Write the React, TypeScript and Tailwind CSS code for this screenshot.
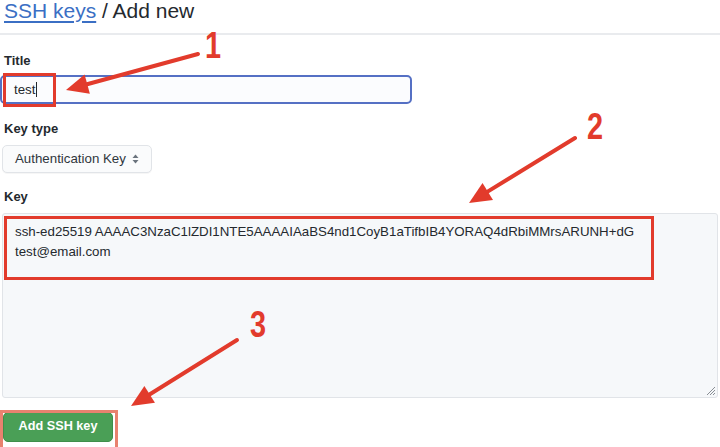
import React from 'react'

const RED = '#e23b2c'

type Pt = [number, number]

// builds a red arrow (shaft + filled head) from tail to tip
function Arrow({ from, to }: { from: Pt; to: Pt }) {
  const dx = to[0] - from[0]
  const dy = to[1] - from[1]
  const len = Math.hypot(dx, dy)
  const ux = dx / len
  const uy = dy / len
  const headLen = 22
  const headW = 10
  const bx = to[0] - ux * headLen
  const by = to[1] - uy * headLen
  const pts = [
    `${to[0]},${to[1]}`,
    `${bx - uy * headW},${by + ux * headW}`,
    `${bx + uy * headW},${by - ux * headW}`,
  ].join(' ')
  return (
    <g>
      <line x1={from[0]} y1={from[1]} x2={bx + ux * 4} y2={by + uy * 4} stroke={RED} strokeWidth={4} strokeLinecap="round" />
      <polygon points={pts} fill={RED} />
    </g>
  )
}

function SortIcon() {
  return (
    <svg width="7" height="10" viewBox="0 0 7 10" className="ml-[6px]">
      <path d="M3.5 0.5 L6.5 4 H0.5 Z" fill="#6a737d" />
      <path d="M3.5 9.5 L6.5 6 H0.5 Z" fill="#6a737d" />
    </svg>
  )
}

export default function App() {
  return (
    <div className="relative w-[720px] h-[447px] overflow-hidden bg-white text-[#24292e] font-['Liberation_Sans',Arial,sans-serif]">
      {/* breadcrumb header */}
      <div className="h-[35px] border-b-2 border-[#e9ebee] pl-[4px] text-[21px] leading-[21px]">
        <a className="text-[#3b6fc4] underline decoration-[1.5px] underline-offset-[3px]">SSH keys</a>
        <span> / Add new</span>
      </div>

      <form className="flex flex-col">
        <label className="mt-[18px] pl-[4px] text-[13px] leading-[16px] font-bold">Title</label>
        <div className="mt-[6px] w-[412px] h-[29px] rounded-[5px] border-2 border-[#5570c4] bg-[#fbfcfe] flex items-center pl-[12px] text-[13.3px]">
          test<span className="ml-[1px] w-[1px] h-[15px] bg-[#24292e]" />
        </div>

        <label className="mt-[17px] pl-[4px] text-[13px] leading-[16px] font-bold">Key type</label>
        <div className="mt-[8px] ml-[2px] w-[150px] h-[28px] rounded-[5px] border border-[#e1e4e8] bg-[#fafbfc] shadow-[0_1px_0_rgba(27,31,35,0.04)] flex items-center pl-[12px] text-[13.3px] text-[#2f363d]">
          Authentication Key
          <SortIcon />
        </div>

        <label className="mt-[16px] pl-[4px] text-[13px] leading-[16px] font-bold">Key</label>
        <div className="relative mt-[8px] ml-[2px] w-[716px] h-[185px] rounded-[3px] border border-[#e1e4e8] bg-[#f6f8fa] pt-[8px] pl-[12px] text-[13.3px] leading-[20px] text-[#24292e]">
          <div>ssh-ed25519 AAAAC3NzaC1lZDI1NTE5AAAAIAaBS4nd1CoyB1aTifbIB4YORAQ4dRbiMMrsARUNH+dG</div>
          <div>test@email.com</div>
          <svg width="12" height="12" viewBox="0 0 12 12" className="absolute right-[1px] bottom-[1px]">
            <path d="M11 3 L3 11 M11 6 L6 11 M11 9 L9 11" stroke="#8a8f95" strokeWidth="1" />
          </svg>
        </div>

        <div className="mt-[14px] ml-[3px]">
          <button type="button" className="w-[110px] h-[30px] rounded-[5px] border border-[#3f8e4b] bg-[#4a9f56] text-white text-[12.7px] font-bold">
            Add SSH key
          </button>
        </div>
      </form>

      {/* annotation layer */}
      <div className="absolute left-[3px] top-[73px] w-[53px] h-[34px] border-[3px] border-[#e23b2c]" />
      <div className="absolute left-[4px] top-[216px] w-[650px] h-[64px] border-[3px] border-[#e23b2c]" />
      <div className="absolute left-0 top-[410px] w-[118px] h-[40px] border-[3px] border-[#e8826f]" />

      <svg className="absolute inset-0 pointer-events-none" width="720" height="447">
        <Arrow from={[198, 54]} to={[66, 90]} />
        <Arrow from={[575, 138]} to={[469, 203]} />
        <Arrow from={[237, 340]} to={[131, 406]} />
      </svg>

      <div className="absolute left-[205px] top-[27px] origin-left scale-x-[0.78] text-[37px] leading-[37px] font-bold text-[#e23b2c]">1</div>
      <div className="absolute left-[587px] top-[108px] origin-left scale-x-[0.78] text-[37px] leading-[37px] font-bold text-[#e23b2c]">2</div>
      <div className="absolute left-[250px] top-[306px] origin-left scale-x-[0.78] text-[37px] leading-[37px] font-bold text-[#e23b2c]">3</div>
    </div>
  )
}
